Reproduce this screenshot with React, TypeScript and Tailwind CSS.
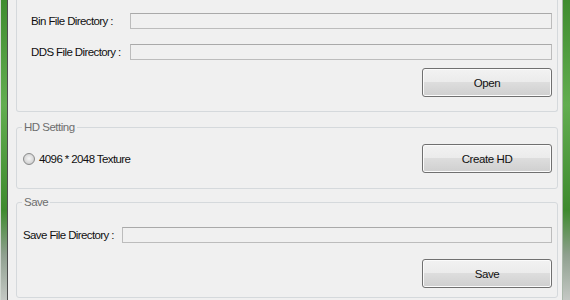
const font = { fontFamily: '"Liberation Sans", Arial, sans-serif' };

function Field({ label }: { label: string }) {
  return (
    <div className="flex items-center">
      <span className="w-[99px] shrink-0 text-[11.5px] leading-[14px] tracking-[-0.6px] text-[#111]">{label}</span>
      <div className="h-[16px] flex-1 border border-[#bcbcbc] border-t-[#a9a9a9] bg-[#f0f0f0]" />
    </div>
  );
}

function Button({ children }: { children: string }) {
  return (
    <button className="h-[29px] w-[130px] self-end rounded-[3px] border border-[#707070] bg-[linear-gradient(to_bottom,#f2f2f2_0%,#ebebeb_50%,#dddddd_50%,#cfcfcf_100%)] text-[11.5px] leading-[14px] tracking-[-0.4px] text-[#111] shadow-[inset_0_0_0_1px_#fbfbfb]">
      {children}
    </button>
  );
}

function Group({ title, children }: { title: string; children: React.ReactNode }) {
  return (
    <fieldset className="rounded-[3px] border border-[#d5d9dc]">
      <legend className="ml-[5px] px-[2px] text-[11.5px] leading-[14px] tracking-[-0.5px] text-[#6e6e6e]">{title}</legend>
      {children}
    </fieldset>
  );
}

export default function App() {
  return (
    <div className="flex h-[300px] w-[570px] overflow-hidden" style={font}>
      {/* left window frame */}
      <div className="flex w-[8px] shrink-0">
        <div className="w-px bg-[#cfd6cf]" />
        <div className="w-[6px] bg-[linear-gradient(to_bottom,#3f8c2f_0%,#62ad50_35%,#3e8a2e_70%,#8fa08f_85%,#c4c8c4_100%)]" />
        <div className="w-px bg-[#4d4d4d]" />
      </div>

      <div className="flex flex-1 flex-col bg-[#f0f0f0] pl-[8px] pr-[4px]">
        <div className="flex h-[112px] flex-col rounded-b-[3px] border-x border-b border-[#d5d9dc] pl-[14px] pr-[5px] pt-[13px]">
          <Field label="Bin File Directory :" />
          <div className="mt-[15px]">
            <Field label="DDS File Directory :" />
          </div>
          <div className="mt-[8px] flex flex-col">
            <Button>Open</Button>
          </div>
        </div>

        <div className="mt-[8px]">
          <Group title="HD Setting">
            <div className="flex items-center pb-[15px] pl-[6px] pr-[5px] pt-[10px]">
              <div className="h-[12px] w-[12px] rounded-full border border-[#8a8b8b] bg-[radial-gradient(circle_at_50%_45%,#f6f6f6_0%,#dadada_55%,#b9b9b9_100%)]" />
              <span className="ml-[4px] flex-1 text-[11.5px] leading-[14px] tracking-[-0.6px] text-[#111]">4096 * 2048 Texture</span>
              <Button>Create HD</Button>
            </div>
          </Group>
        </div>

        <div className="mt-[6px]">
          <Group title="Save">
            <div className="flex flex-col pb-[9px] pl-[6px] pr-[5px] pt-[18px]">
              <Field label="Save File Directory :" />
              <div className="mt-[16px] flex flex-col">
                <Button>Save</Button>
              </div>
            </div>
          </Group>
        </div>
      </div>

      {/* right window frame */}
      <div className="flex w-[8px] shrink-0">
        <div className="w-px bg-[#a9b7a9]" />
        <div className="w-[7px] bg-[linear-gradient(to_bottom,#3f8c2f_0%,#62ad50_35%,#3e8a2e_70%,#8fa08f_85%,#c4c8c4_100%)]" />
      </div>
    </div>
  );
}
